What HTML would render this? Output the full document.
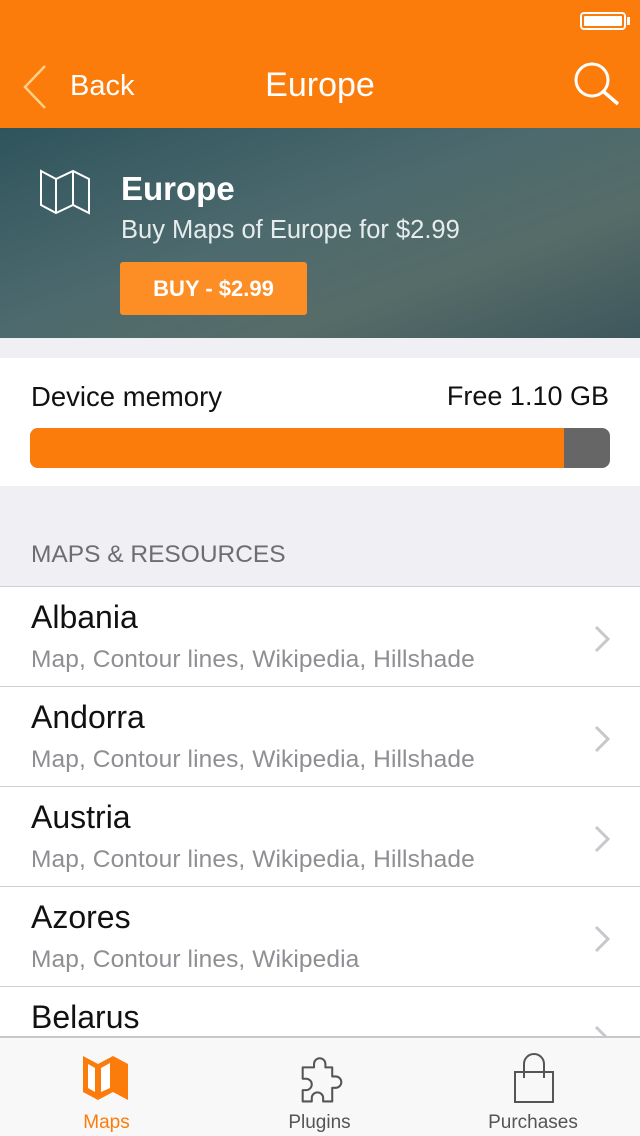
<!DOCTYPE html>
<html><head><meta charset="utf-8"><style>
*{margin:0;padding:0;box-sizing:border-box}
body{width:640px;height:1136px;overflow:hidden;font-family:"Liberation Sans",sans-serif;background:#efeff4;position:relative}
.abs{position:absolute}
.nav{left:0;top:0;width:640px;height:128px;background:#fb7c0b;color:#fff}
.hero{left:0;top:128px;width:640px;height:210px;background:linear-gradient(160deg,#2f545c 0%,#4d6a6e 45%,#566c68 70%,#3e575d 100%)}
.mem{left:0;top:358px;width:640px;height:128px;background:#fff}
.row{left:0;width:640px;height:100px;background:#fff;border-top:1px solid #d0d0d4}
.row .t{position:absolute;left:31px;top:12px;font-size:32px;color:#111}
.row .s{position:absolute;left:31px;top:59px;font-size:24.5px;color:#8e8e93;letter-spacing:0.1px}
.row svg{position:absolute;right:30px;top:38px}
.tab{left:0;top:1036px;width:640px;height:100px;background:#f8f8f8;border-top:2px solid #c8c8cc}
</style></head><body>
<div class="abs nav">
 <div class="abs" style="left:580px;top:12px;width:46px;height:18px;border:2px solid #fff;border-radius:4px;padding:2px"><div style="background:#fff;width:100%;height:100%;border-radius:1px"></div></div>
 <div class="abs" style="left:627px;top:17px;width:3px;height:8px;background:#fff"></div>
 <svg class="abs" style="left:22px;top:64px" width="26" height="46"><path d="M23 2 L3 23 L23 44" fill="none" stroke="#fdd08a" stroke-width="2.5"/></svg>
 <div class="abs" style="left:70px;top:70px;font-size:29px">Back</div>
 <div class="abs" style="left:0;width:640px;text-align:center;top:66px;font-size:34px">Europe</div>
 <svg class="abs" style="left:572px;top:60px" width="50" height="46"><circle cx="20" cy="20" r="16" fill="none" stroke="#fff" stroke-width="3"/><path d="M32 32 L46 44" stroke="#fff" stroke-width="3.5"/></svg>
</div>
<div class="abs hero">
 <svg class="abs" style="left:39px;top:41px" width="52" height="48"><path d="M2 2 L17 10 L34 2 L50 10 L50 44 L34 36 L17 44 L2 36 Z M17 10 V44 M34 2 V36" fill="none" stroke="#fff" stroke-width="2"/></svg>
 <div class="abs" style="left:121px;top:42px;font-size:33px;font-weight:bold;color:#fff">Europe</div>
 <div class="abs" style="left:121px;top:88px;font-size:25.5px;color:#e6ecec">Buy Maps of Europe for $2.99</div>
 <div class="abs" style="left:120px;top:134px;width:187px;height:53px;background:#fd8e25;border-radius:3px;color:#fff;font-weight:bold;font-size:22px;text-align:center;line-height:53px">BUY - $2.99</div>
</div>
<div class="abs mem">
 <div class="abs" style="left:31px;top:23px;font-size:27.5px;color:#111">Device memory</div>
 <div class="abs" style="right:31px;top:23px;font-size:27px;color:#111">Free 1.10 GB</div>
 <div class="abs" style="left:30px;top:70px;width:580px;height:40px;border-radius:8px;background:#666;overflow:hidden"><div style="width:534px;height:100%;background:#fb7c0b"></div></div>
</div>
<div class="abs" style="left:31px;top:541px;font-size:24.5px;color:#6d6d72">MAPS &amp; RESOURCES</div>
<div class="abs row" style="top:586px"><div class="t">Albania</div><div class="s">Map, Contour lines, Wikipedia, Hillshade</div><svg width="16" height="28"><path d="M2 2 L14 14 L2 26" fill="none" stroke="#c7c7cc" stroke-width="3"/></svg></div>
<div class="abs row" style="top:686px"><div class="t">Andorra</div><div class="s">Map, Contour lines, Wikipedia, Hillshade</div><svg width="16" height="28"><path d="M2 2 L14 14 L2 26" fill="none" stroke="#c7c7cc" stroke-width="3"/></svg></div>
<div class="abs row" style="top:786px"><div class="t">Austria</div><div class="s">Map, Contour lines, Wikipedia, Hillshade</div><svg width="16" height="28"><path d="M2 2 L14 14 L2 26" fill="none" stroke="#c7c7cc" stroke-width="3"/></svg></div>
<div class="abs row" style="top:886px"><div class="t">Azores</div><div class="s">Map, Contour lines, Wikipedia</div><svg width="16" height="28"><path d="M2 2 L14 14 L2 26" fill="none" stroke="#c7c7cc" stroke-width="3"/></svg></div>
<div class="abs row" style="top:986px"><div class="t">Belarus</div><svg width="16" height="28"><path d="M2 2 L14 14 L2 26" fill="none" stroke="#c7c7cc" stroke-width="3"/></svg></div>
<div class="abs tab">
 <svg class="abs" style="left:81px;top:16px" width="50" height="48"><path d="M2 2 L17 10 L32 2 L47 10 L47 46 L32 38 L17 46 L2 38 Z" fill="#fb7c0b"/><path d="M7 10 L14 14 V38 L7 34 Z M20 14 L29 9 V34 L20 38 Z" fill="#fff"/></svg>
 <div class="abs" style="left:0;width:213px;text-align:center;top:74px;font-size:19px;color:#fb7c0b">Maps</div>
 <svg class="abs" style="left:296px;top:18px" width="52" height="50" viewBox="0 0 42 44"><path d="M4 10 H14 V7 A5 5 0 0 1 24 7 V10 H30 V18 H33 A5 5 0 0 1 33 28 H30 V40 H22 V37 A5 5 0 0 0 12 37 V40 H4 V30 H7 A5 5 0 0 0 7 20 H4 Z" fill="none" stroke="#555" stroke-width="1.8" stroke-linejoin="round"/></svg>
 <div class="abs" style="left:213px;width:213px;text-align:center;top:74px;font-size:19px;color:#555">Plugins</div>
 <svg class="abs" style="left:512px;top:14px" width="44" height="52"><path d="M3 20 H41 V50 H3 Z" fill="none" stroke="#555" stroke-width="2"/><path d="M12 26 V12 A10 10 0 0 1 32 12 V26" fill="none" stroke="#555" stroke-width="2"/></svg>
 <div class="abs" style="left:426px;width:214px;text-align:center;top:74px;font-size:19px;color:#555">Purchases</div>
</div>
</body></html>
